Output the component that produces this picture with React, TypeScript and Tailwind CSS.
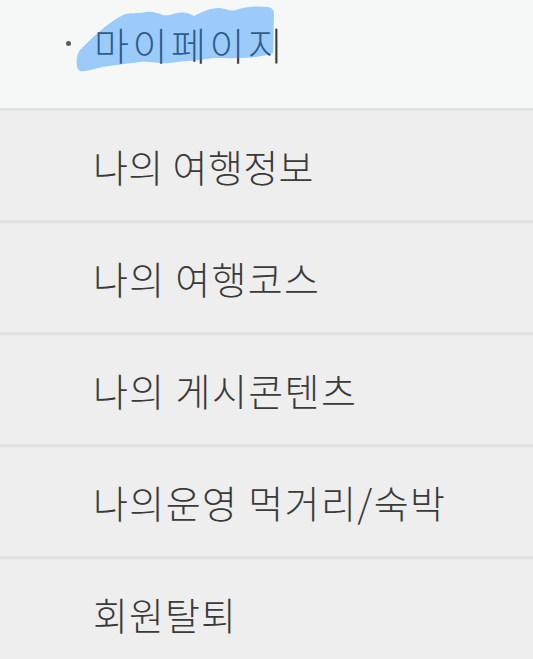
import React from 'react';

// tracking per label, tuned so each line spans the same width as the design
const menuItems = [
  { label: '나의 여행정보', tracking: 'tracking-[0.4px]' },
  { label: '나의 여행코스', tracking: 'tracking-[1.3px]' },
  { label: '나의 게시콘텐츠', tracking: 'tracking-[1.4px]' },
  { label: '나의운영 먹거리/숙박', tracking: 'tracking-[1.4px]' },
  { label: '회원탈퇴', tracking: 'tracking-[1px]' },
];

const fontStyle = "font-['Noto_Sans_CJK_KR','Noto_Sans',sans-serif]";

// hand-drawn marker stroke over the active title
const Highlight: React.FC = () => (
  <svg
    className="absolute left-0 top-0 pointer-events-none"
    width="533"
    height="108"
    viewBox="0 0 533 108"
  >
    <path
      d="M77 66 C76 60 77 54 80 50 C92 38 106 24 123 15 C130 12 138 14 146 12 C156 10 162 17 170 15 C178 12 186 11 194 16 C202 12 210 8 218 8 C226 8 230 12 236 10 C246 6 258 6 268 7 C272 8 274 10 274 14 L273 53 C262 57 250 58 238 58 C226 59 216 57 206 59 C194 61 182 61 170 63 C160 64 150 61 140 62 C126 64 114 65 102 67 C94 69 86 72 80 71 C78 70 77 68 77 66 Z"
      fill="#208dfd"
      fillOpacity={0.42}
    />
  </svg>
);

const App: React.FC = () => {
  return (
    <div className={`w-[533px] h-[659px] overflow-hidden bg-[#eeeeee] ${fontStyle}`}>
      {/* Header */}
      <div className="relative h-[108px] bg-[#f6f8f8] flex items-center pb-[21px] pl-[66px]">
        <span className="w-[5px] h-[5px] rounded-full bg-[#5a5a5a] mr-[23px]" />
        <span className="text-[38px] leading-none font-light tracking-[3.5px] text-[#3a3a3a]">마이페이지</span>
        <Highlight />
      </div>

      {/* Menu */}
      {menuItems.map((item) => (
        <div
          key={item.label}
          className="h-[112px] border-t-[3px] border-[#e2e2e2] flex items-center pl-[93px]"
        >
          <span className={`text-[38px] leading-none font-light text-[#3a3a3a] ${item.tracking}`}>
            {item.label}
          </span>
        </div>
      ))}
    </div>
  );
};

export default App;
